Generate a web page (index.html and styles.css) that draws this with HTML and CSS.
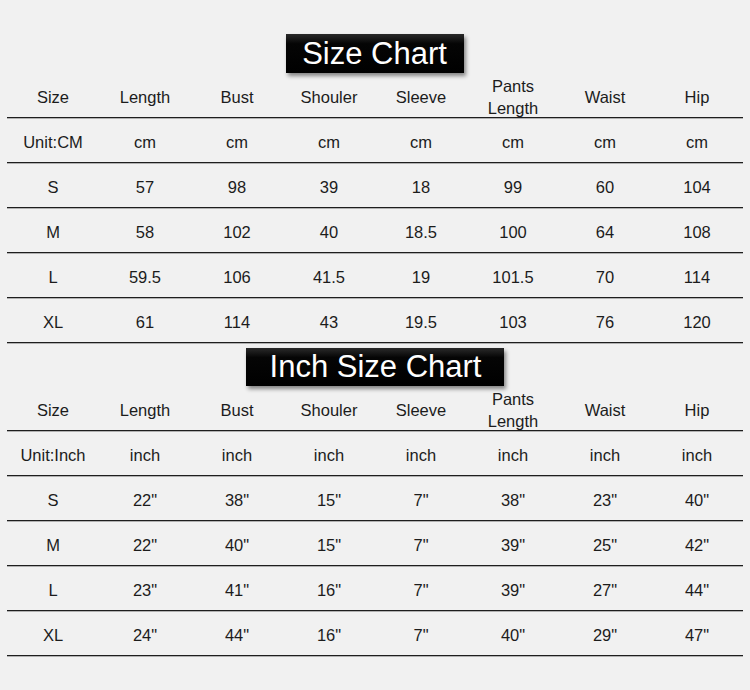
FILE: index.html
```html
<!DOCTYPE html>
<html>
<head>
<meta charset="utf-8">
<link rel="stylesheet" href="styles.css">
</head>
<body>
<div class="page">
  <section class="chart chart--cm">
    <div class="title-wrap"><h1 class="title title--short">Size Chart</h1></div>
    <div class="table">
      <div class="row head"><span>Size</span><span>Length</span><span>Bust</span><span>Shouler</span><span>Sleeve</span><span>Pants<br>Length</span><span>Waist</span><span>Hip</span></div>
      <div class="row"><span>Unit:CM</span><span>cm</span><span>cm</span><span>cm</span><span>cm</span><span>cm</span><span>cm</span><span>cm</span></div>
      <div class="row"><span>S</span><span>57</span><span>98</span><span>39</span><span>18</span><span>99</span><span>60</span><span>104</span></div>
      <div class="row"><span>M</span><span>58</span><span>102</span><span>40</span><span>18.5</span><span>100</span><span>64</span><span>108</span></div>
      <div class="row"><span>L</span><span>59.5</span><span>106</span><span>41.5</span><span>19</span><span>101.5</span><span>70</span><span>114</span></div>
      <div class="row"><span>XL</span><span>61</span><span>114</span><span>43</span><span>19.5</span><span>103</span><span>76</span><span>120</span></div>
    </div>
  </section>
  <section class="chart chart--inch">
    <div class="title-wrap"><h1 class="title title--long">Inch Size Chart</h1></div>
    <div class="table">
      <div class="row head"><span>Size</span><span>Length</span><span>Bust</span><span>Shouler</span><span>Sleeve</span><span>Pants<br>Length</span><span>Waist</span><span>Hip</span></div>
      <div class="row"><span>Unit:Inch</span><span>inch</span><span>inch</span><span>inch</span><span>inch</span><span>inch</span><span>inch</span><span>inch</span></div>
      <div class="row"><span>S</span><span>22"</span><span>38"</span><span>15"</span><span>7"</span><span>38"</span><span>23"</span><span>40"</span></div>
      <div class="row"><span>M</span><span>22"</span><span>40"</span><span>15"</span><span>7"</span><span>39"</span><span>25"</span><span>42"</span></div>
      <div class="row"><span>L</span><span>23"</span><span>41"</span><span>16"</span><span>7"</span><span>39"</span><span>27"</span><span>44"</span></div>
      <div class="row"><span>XL</span><span>24"</span><span>44"</span><span>16"</span><span>7"</span><span>40"</span><span>29"</span><span>47"</span></div>
    </div>
  </section>
</div>
</body>
</html>
```
FILE: styles.css
```css
html, body {
  margin: 0;
  padding: 0;
  background: #f1f1f1;
}
body {
  width: 750px;
  height: 690px;
  overflow: hidden;
  font-family: "Liberation Sans", Arial, sans-serif;
  color: #1c1c1c;
}
.page {
  padding: 34px 7px 0;
}
.title-wrap {
  display: flex;
  justify-content: center;
}
.title {
  margin: 0;
  font-weight: normal;
  font-size: 31px;
  line-height: 39px;
  height: 39px;
  color: #fff;
  background: linear-gradient(#2a2a2a 0%, #050505 25%, #000 100%);
  box-shadow: 2px 3px 4px rgba(0, 0, 0, 0.45);
}
.title--short {
  padding: 0 17px 0 16px;
}
.title--long {
  padding: 0 23px 0 24px;
  height: 38px;
  line-height: 38px;
}
.chart--inch {
  margin-top: 5px;
}
.row {
  display: grid;
  grid-template-columns: repeat(8, 92px);
  height: 44px;
  align-items: center;
  border-bottom: 1px solid #1e1e1e;
  box-shadow: 0 1px 0 rgba(30, 30, 30, 0.3);
  font-size: 16.5px;
}
.row span {
  text-align: center;
  padding-top: 5px;
}
.row.head {
  line-height: 22px;
}
.row.head span {
  padding-top: 2px;
}
```
